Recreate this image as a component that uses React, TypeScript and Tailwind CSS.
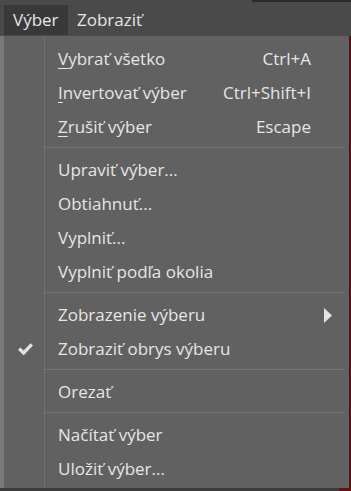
import React from 'react';

type Item =
  | { type: 'sep' }
  | { type: 'item'; label: string; mnemonic?: boolean; shortcut?: string; submenu?: boolean; checked?: boolean };

const ITEMS: Item[] = [
  { type: 'item', label: 'Vybrať všetko', mnemonic: true, shortcut: 'Ctrl+A' },
  { type: 'item', label: 'Invertovať výber', mnemonic: true, shortcut: 'Ctrl+Shift+I' },
  { type: 'item', label: 'Zrušiť výber', mnemonic: true, shortcut: 'Escape' },
  { type: 'sep' },
  { type: 'item', label: 'Upraviť výber...' },
  { type: 'item', label: 'Obtiahnuť...' },
  { type: 'item', label: 'Vyplniť...' },
  { type: 'item', label: 'Vyplniť podľa okolia' },
  { type: 'sep' },
  { type: 'item', label: 'Zobrazenie výberu', submenu: true },
  { type: 'item', label: 'Zobraziť obrys výberu', checked: true },
  { type: 'sep' },
  { type: 'item', label: 'Orezať' },
  { type: 'sep' },
  { type: 'item', label: 'Načítať výber' },
  { type: 'item', label: 'Uložiť výber...' },
];

const CheckIcon = () => (
  <svg width="15" height="12" viewBox="0 0 15 12">
    <path d="M1.2 5.6 L5.6 10 L13.8 1.4" fill="none" stroke="#e2e2e2" strokeWidth="3.4" />
  </svg>
);

const MenuRow: React.FC<{ item: Extract<Item, { type: 'item' }> }> = ({ item }) => (
  <div className="flex h-[34px] items-center">
    <div className="flex w-[40px] shrink-0 items-center justify-center pl-[2px]">
      {item.checked && <CheckIcon />}
    </div>
    <div className="flex flex-1 items-center pl-[14px] pr-[38px]">
      <span className="flex-1">
        {item.mnemonic ? (
          <>
            <span className="underline decoration-1 underline-offset-[3px]">{item.label[0]}</span>
            {item.label.slice(1)}
          </>
        ) : (
          item.label
        )}
      </span>
      {item.shortcut && <span>{item.shortcut}</span>}
      {item.submenu && (
        <svg width="8" height="15" viewBox="0 0 8 15" className="-mr-[21px]">
          <path d="M0 0 L8 7.5 L0 15 Z" fill="#e4e4e4" />
        </svg>
      )}
    </div>
  </div>
);

export default function App() {
  return (
    <div
      className="relative flex h-[491px] w-[351px] flex-col overflow-hidden bg-[#3c3c3c] text-[17px] text-[#e6e6e6]"
      style={{ fontFamily: '"Open Sans", "Noto Sans", sans-serif' }}
    >
      <div className="absolute right-0 top-0 h-[2px] w-[99px] bg-[#2c2c2c]" />
      <div className="flex h-[36px] shrink-0 items-start bg-[#4a4a4a] pl-[4px] pt-[5px]">
        <div className="flex h-[30px] w-[64px] items-center bg-[#393939] pl-[9px]">Výber</div>
        <div className="flex h-[30px] items-center pl-[9px]">Zobraziť</div>
      </div>
      <div className="flex h-[452px] shrink-0">
        <div className="w-[4px] bg-[#7a7a7a]" />
        <div className="relative flex-1 bg-[#616161] pb-[2px] pt-[6px]">
          <div className="absolute bottom-0 left-[40px] top-0 w-px bg-[#727272]" />
          {ITEMS.map((it, i) =>
            it.type === 'sep' ? (
              <div key={i} className="pb-[5px] pl-[40px] pr-[4px] pt-[3px]">
                <div className="h-px bg-[#767676]" />
              </div>
            ) : (
              <MenuRow key={i} item={it} />
            )
          )}
        </div>
        <div className="w-[2px] bg-[#5a1010]" />
      </div>
      <div className="flex flex-1 justify-end">
        <div className="w-[12px] bg-[#6a1010]" />
      </div>
    </div>
  );
}
